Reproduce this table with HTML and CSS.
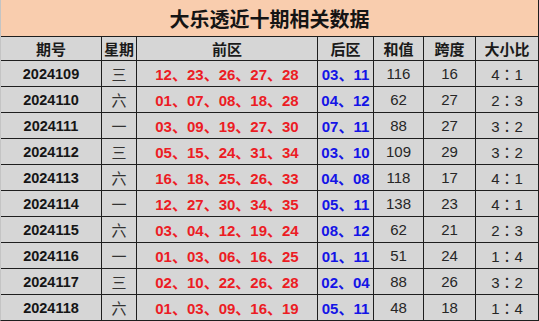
FILE: index.html
```html
<!DOCTYPE html>
<html lang="zh-CN">
<head>
<meta charset="utf-8">
<title>大乐透近十期相关数据</title>
<link rel="stylesheet" href="styles.css">
</head>
<body>
<div class="sheet">
  <div class="title">大乐透近十期相关数据</div>

  <div class="hd">期号</div><div class="hd">星期</div><div class="hd">前区</div><div class="hd">后区</div><div class="hd">和值</div><div class="hd">跨度</div><div class="hd">大小比</div>

  <div class="c date">2024109</div><div class="c wk">三</div><div class="c front">12、23、26、27、28</div><div class="c back">03、11</div><div class="c num">116</div><div class="c num">16</div><div class="c num ratio">4：1</div>
  <div class="c date">2024110</div><div class="c wk">六</div><div class="c front">01、07、08、18、28</div><div class="c back">04、12</div><div class="c num">62</div><div class="c num">27</div><div class="c num ratio">2：3</div>
  <div class="c date">2024111</div><div class="c wk">一</div><div class="c front">03、09、19、27、30</div><div class="c back">07、11</div><div class="c num">88</div><div class="c num">27</div><div class="c num ratio">3：2</div>
  <div class="c date">2024112</div><div class="c wk">三</div><div class="c front">05、15、24、31、34</div><div class="c back">03、10</div><div class="c num">109</div><div class="c num">29</div><div class="c num ratio">3：2</div>
  <div class="c date">2024113</div><div class="c wk">六</div><div class="c front">16、18、25、26、33</div><div class="c back">04、08</div><div class="c num">118</div><div class="c num">17</div><div class="c num ratio">4：1</div>
  <div class="c date">2024114</div><div class="c wk">一</div><div class="c front">12、27、30、34、35</div><div class="c back">05、11</div><div class="c num">138</div><div class="c num">23</div><div class="c num ratio">4：1</div>
  <div class="c date">2024115</div><div class="c wk">六</div><div class="c front">03、04、12、19、24</div><div class="c back">08、12</div><div class="c num">62</div><div class="c num">21</div><div class="c num ratio">2：3</div>
  <div class="c date">2024116</div><div class="c wk">一</div><div class="c front">01、03、06、16、25</div><div class="c back">01、11</div><div class="c num">51</div><div class="c num">24</div><div class="c num ratio">1：4</div>
  <div class="c date">2024117</div><div class="c wk">三</div><div class="c front">02、10、22、26、28</div><div class="c back">02、04</div><div class="c num">88</div><div class="c num">26</div><div class="c num ratio">3：2</div>
  <div class="c date">2024118</div><div class="c wk">六</div><div class="c front">01、03、09、16、19</div><div class="c back">05、11</div><div class="c num">48</div><div class="c num">18</div><div class="c num ratio">1：4</div>
</div>
</body>
</html>
```
FILE: styles.css
```css
html, body {
  margin: 0;
  padding: 0;
  background: #ffffff;
}

.sheet {
  width: 539px;
  box-sizing: border-box;
  display: grid;
  grid-template-columns: 100px 34px 180px 55px 49px 51px 62px;
  grid-template-rows: 36px 23px repeat(10, 25px);
  gap: 1px;
  background: #1e1e1e;
  border-left: 1px solid #c4c4c4;
  border-right: 1px solid #1e1e1e;
  border-bottom: 1px solid #1e1e1e;
  font-family: "Liberation Sans", "Noto Sans CJK SC", sans-serif;
}

.title {
  grid-column: 1 / -1;
  background: #f9cdae;
  display: flex;
  align-items: center;
  justify-content: center;
  font-family: "Noto Sans CJK SC", sans-serif;
  font-weight: bold;
  font-size: 20px;
  color: #141414;
  padding-top: 1px;
}

.hd,
.c {
  background: #d6d6d6;
  display: flex;
  align-items: center;
  justify-content: center;
  white-space: nowrap;
}

.hd {
  font-family: "Noto Sans CJK SC", sans-serif;
  font-weight: bold;
  font-size: 15px;
  color: #1a1a1a;
}

.c {
  font-size: 15px;
  color: #1a1a1a;
}

.date {
  font-weight: bold;
  font-size: 14.5px;
  color: #151515;
}

.wk {
  font-family: "Noto Sans CJK SC", sans-serif;
  font-size: 15px;
  color: #333333;
}

.front {
  color: #ec1c24;
  font-weight: bold;
}

.back {
  color: #1414e6;
  font-weight: bold;
}

.num {
  color: #262626;
}

.ratio {
  font-family: "Liberation Sans", "Noto Sans CJK TC", sans-serif;
}
```
